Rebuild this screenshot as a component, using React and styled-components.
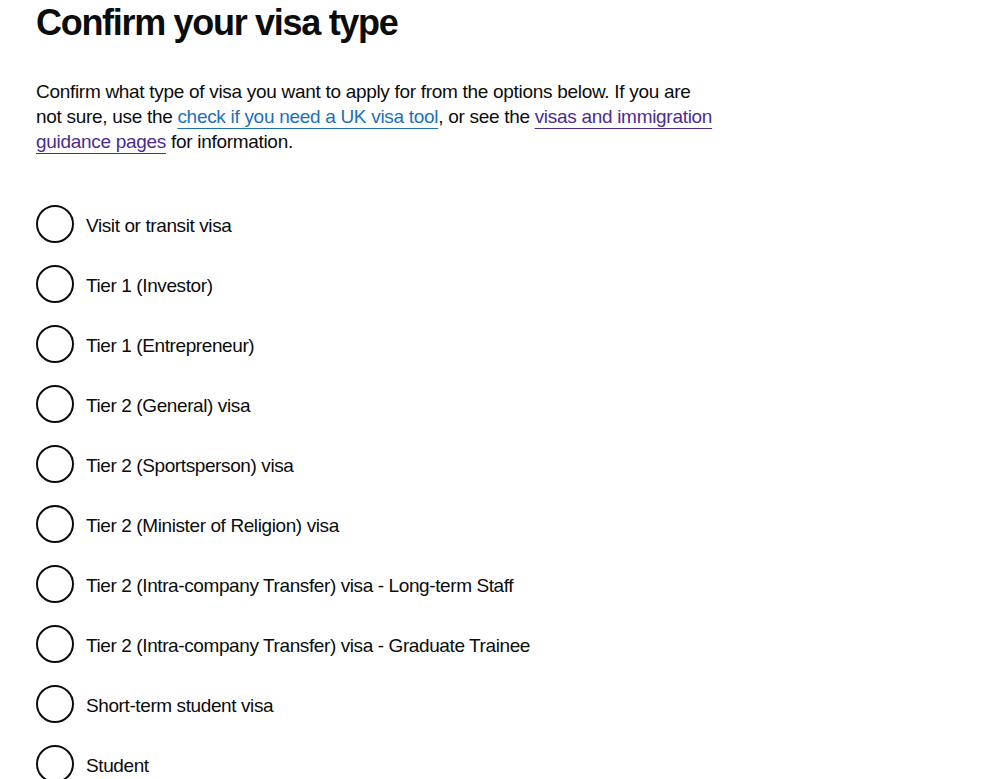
import React from 'react';
import styled, { createGlobalStyle } from 'styled-components';

const GlobalStyle = createGlobalStyle`
  html, body {
    margin: 0;
    padding: 0;
    background: #ffffff;
  }
  body {
    font-family: "Liberation Sans", Arial, sans-serif;
    color: #0b0c0c;
    -webkit-font-smoothing: antialiased;
  }
`;

const Page = styled.main`
  padding: 3px 36px 0 36px;
`;

const Heading = styled.h1`
  margin: 0 0 36px 0;
  font-size: 36px;
  line-height: 40px;
  font-weight: 700;
  letter-spacing: -1.3px;
`;

const Lead = styled.p`
  margin: 0 0 51px 0;
  max-width: 681px;
  font-size: 19px;
  line-height: 25px;
  letter-spacing: -0.3px;
`;

const Link = styled.a`
  color: ${(p) => (p.$visited ? '#4c2c92' : '#1d70b8')};
  text-decoration: underline;
  text-decoration-thickness: 1px;
  text-underline-offset: 5px;
`;

const RadioList = styled.div`
  display: flex;
  flex-direction: column;
  gap: 22px;
`;

const RadioItem = styled.label`
  display: flex;
  align-items: center;
  gap: 12px;
  font-size: 19px;
  line-height: 25px;
  letter-spacing: -0.4px;
  cursor: pointer;
`;

const Circle = styled.span`
  flex: none;
  width: 38px;
  height: 38px;
  box-sizing: border-box;
  border: 2px solid #0b0c0c;
  border-radius: 50%;
`;

const Caption = styled.span`
  padding-top: 2px;
`;

const options = [
  'Visit or transit visa',
  'Tier 1 (Investor)',
  'Tier 1 (Entrepreneur)',
  'Tier 2 (General) visa',
  'Tier 2 (Sportsperson) visa',
  'Tier 2 (Minister of Religion) visa',
  'Tier 2 (Intra-company Transfer) visa - Long-term Staff',
  'Tier 2 (Intra-company Transfer) visa - Graduate Trainee',
  'Short-term student visa',
  'Student',
];

export default function App() {
  return (
    <>
      <GlobalStyle />
      <Page>
        <Heading>Confirm your visa type</Heading>
        <Lead>
          Confirm what type of visa you want to apply for from the options below. If you are
          not sure, use the <Link href="#">check if you need a UK visa tool</Link>, or see the{' '}
          <Link href="#" $visited>visas and immigration guidance pages</Link> for information.
        </Lead>
        <RadioList>
          {options.map((o) => (
            <RadioItem key={o}>
              <Circle />
              <Caption>{o}</Caption>
            </RadioItem>
          ))}
        </RadioList>
      </Page>
    </>
  );
}
